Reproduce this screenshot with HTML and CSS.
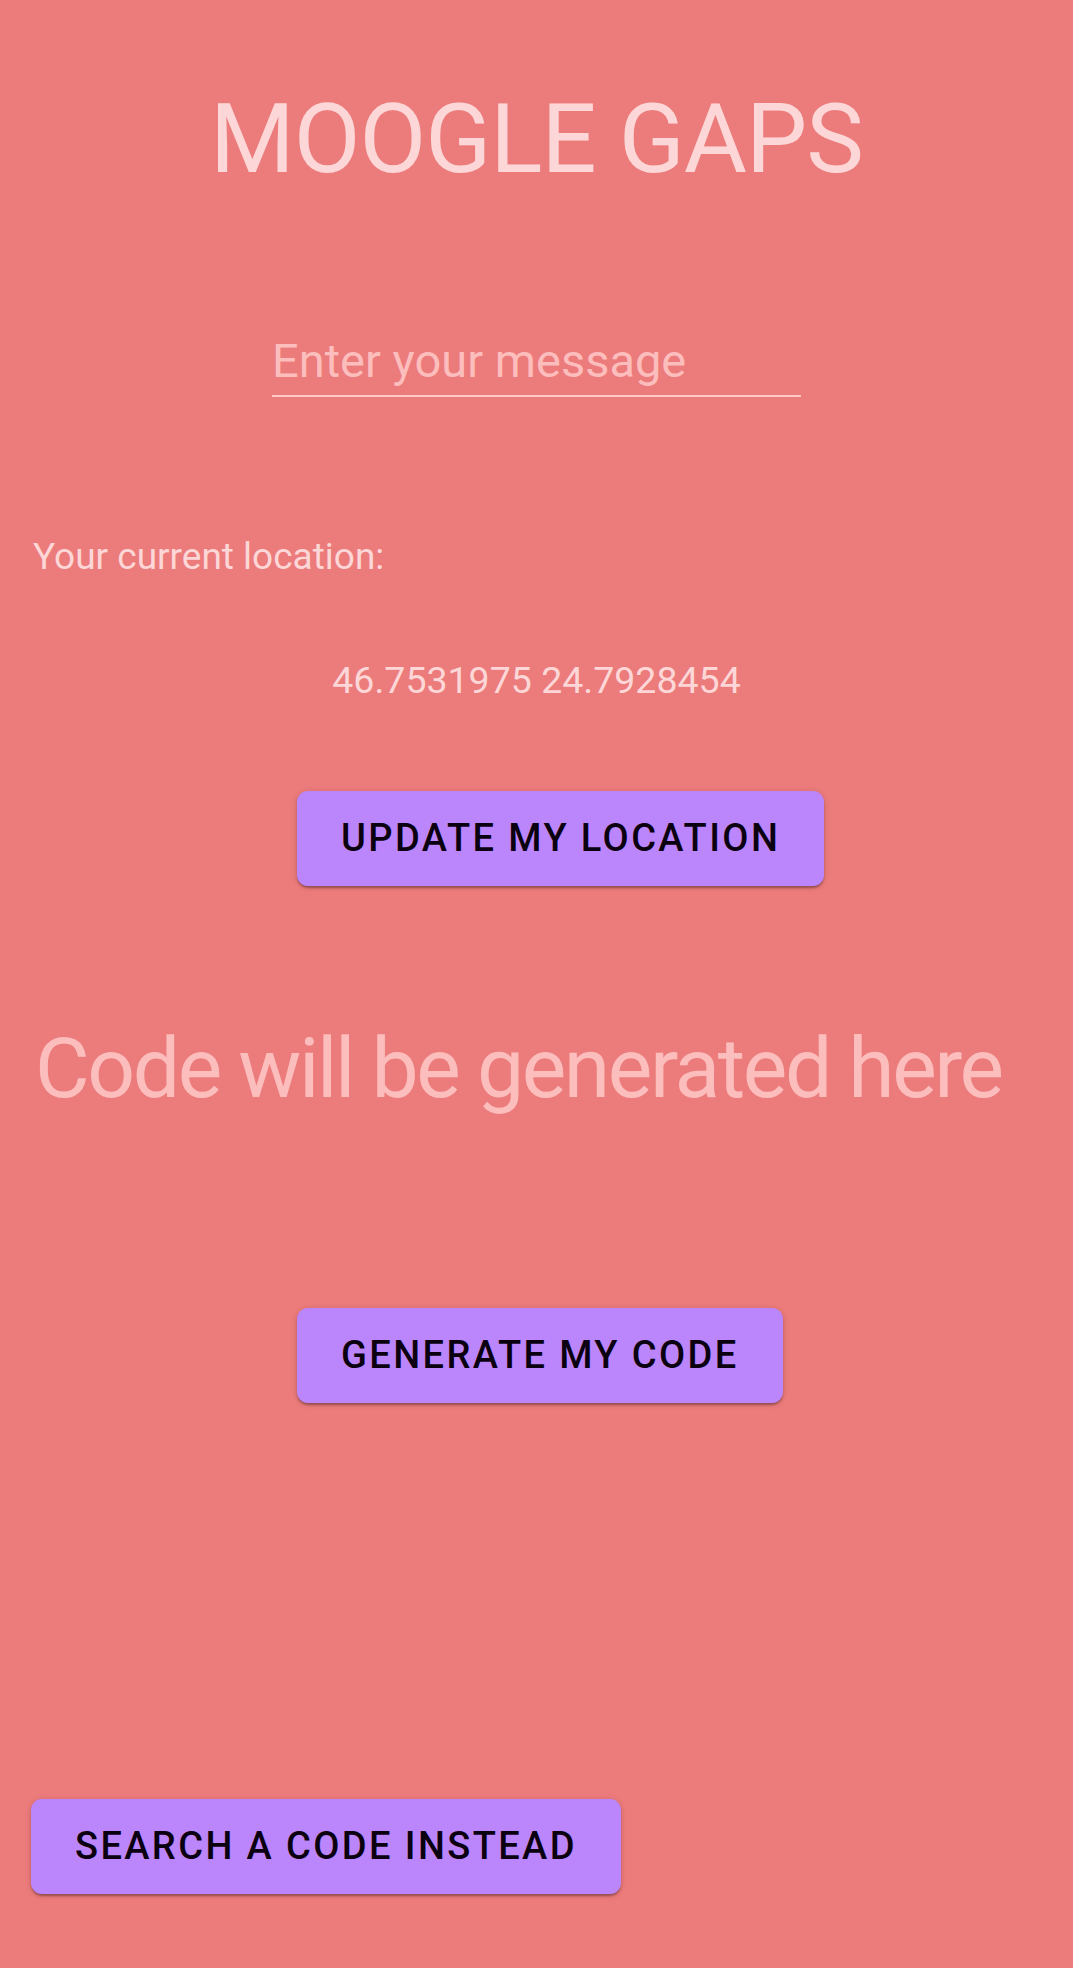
FILE: index.html
```html
<!DOCTYPE html>
<html lang="en">
<head>
<meta charset="utf-8">
<title>Moogle Gaps</title>
<link rel="stylesheet" href="styles.css">
</head>
<body>
<main class="screen">
  <h1 class="title">MOOGLE GAPS</h1>
  <div class="field-row">
    <input class="message-input" type="text" placeholder="Enter your message">
  </div>
  <p class="location-label">Your current location:</p>
  <p class="coords">46.7531975 24.7928454</p>
  <div class="btn-row row-update">
    <button class="btn">UPDATE MY LOCATION</button>
  </div>
  <p class="code-text">Code will be generated here</p>
  <div class="btn-row row-generate">
    <button class="btn">GENERATE MY CODE</button>
  </div>
  <div class="btn-row row-search">
    <button class="btn">SEARCH A CODE INSTEAD</button>
  </div>
</main>
</body>
</html>
```
FILE: styles.css
```css
html, body {
  margin: 0;
  padding: 0;
}
body {
  background: #ec7b7b;
  font-family: Roboto, "Liberation Sans", sans-serif;
  width: 1073px;
  height: 1968px;
  overflow: hidden;
}
.screen {
  display: flex;
  flex-direction: column;
  padding-top: 91px;
}
.title {
  margin: 0;
  font-weight: 400;
  font-size: 97px;
  letter-spacing: -1px;
  line-height: 1;
  color: #fdd7d7;
  text-align: center;
}
.field-row {
  display: flex;
  justify-content: center;
  margin-top: 149px;
}
.message-input {
  width: 529px;
  box-sizing: border-box;
  font-family: Roboto, "Liberation Sans", sans-serif;
  font-size: 47px;
  line-height: 1;
  height: 60px;
  padding: 0 0 12px 0;
  margin: 0;
  border: none;
  border-bottom: 2px solid #fcc9c9;
  background: transparent;
  color: #fdd7d7;
  outline: none;
}
.message-input::placeholder {
  color: #fcbdbd;
  opacity: 1;
}
.location-label {
  margin: 141px 0 0 33px;
  font-size: 37px;
  line-height: 1;
  color: #fdd7d7;
}
.coords {
  margin: 87px 0 0 0;
  font-size: 37.5px;
  line-height: 1;
  color: #fdd7d7;
  text-align: center;
}
.btn-row {
  display: flex;
  padding-left: 297px;
}
.row-update {
  margin-top: 91px;
}
.row-generate {
  margin-top: 197px;
}
.row-search {
  padding-left: 31px;
  margin-top: 396px;
}
.btn {
  height: 95px;
  padding: 0 44px;
  border: none;
  border-radius: 11px;
  background: #bb86fc;
  color: #0a0010;
  font-family: Roboto, "Liberation Sans", sans-serif;
  font-weight: 500;
  font-size: 38px;
  letter-spacing: 2.4px;
  display: flex;
  align-items: center;
  box-shadow: 0 3px 2px -1px rgba(0,0,0,0.2), 0 2px 3px 0 rgba(0,0,0,0.14), 0 1px 6px 0 rgba(0,0,0,0.12);
}
.code-text {
  margin: 141px 0 0 35px;
  font-size: 84px;
  letter-spacing: -2.4px;
  white-space: nowrap;
  line-height: 1;
  color: #fcbdbd;
}
```
